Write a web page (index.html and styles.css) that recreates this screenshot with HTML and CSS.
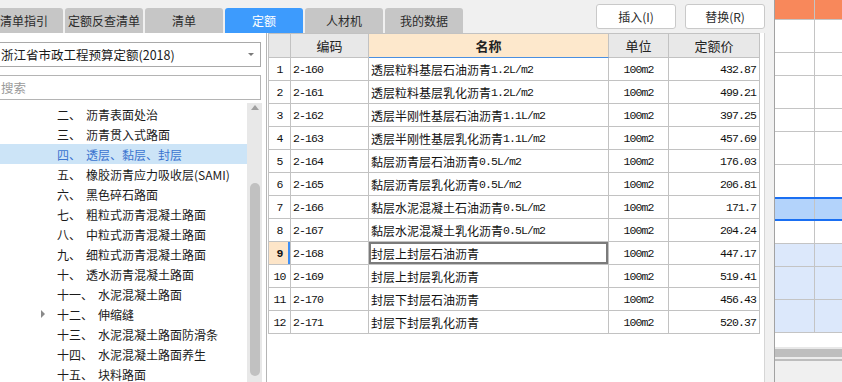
FILE: index.html
```html
<!DOCTYPE html>
<html lang="zh">
<head>
<meta charset="utf-8">
<title>定额</title>
<link rel="stylesheet" href="styles.css">
</head>
<body>
<div class="app">
  <div class="main">
    <div class="topbar">
      <div class="tabs">
        <div class="tab">清单指引</div>
        <div class="tab">定额反查清单</div>
        <div class="tab">清单</div>
        <div class="tab active">定额</div>
        <div class="tab">人材机</div>
        <div class="tab">我的数据</div>
      </div>
      <div class="actions">
        <button class="btn">插入(I)</button>
        <button class="btn">替换(R)</button>
      </div>
    </div>
    <div class="content">
      <aside class="left">
        <div class="select"><span>浙江省市政工程预算定额(2018)</span><i class="caret"></i></div>
        <div class="search">搜索</div>
        <div class="treewrap">
          <ul class="tree">
            <li class="node"><i class="toggle"></i><span class="num">二、</span><span class="label">沥青表面处治</span></li>
            <li class="node"><i class="toggle"></i><span class="num">三、</span><span class="label">沥青贯入式路面</span></li>
            <li class="node sel"><i class="toggle"></i><span class="num">四、</span><span class="label">透层、黏层、封层</span></li>
            <li class="node"><i class="toggle"></i><span class="num">五、</span><span class="label">橡胶沥青应力吸收层(SAMI)</span></li>
            <li class="node"><i class="toggle"></i><span class="num">六、</span><span class="label">黑色碎石路面</span></li>
            <li class="node"><i class="toggle"></i><span class="num">七、</span><span class="label">粗粒式沥青混凝土路面</span></li>
            <li class="node"><i class="toggle"></i><span class="num">八、</span><span class="label">中粒式沥青混凝土路面</span></li>
            <li class="node"><i class="toggle"></i><span class="num">九、</span><span class="label">细粒式沥青混凝土路面</span></li>
            <li class="node"><i class="toggle"></i><span class="num">十、</span><span class="label">透水沥青混凝土路面</span></li>
            <li class="node"><i class="toggle"></i><span class="num">十一、</span><span class="label">水泥混凝土路面</span></li>
            <li class="node"><i class="toggle has"></i><span class="num">十二、</span><span class="label">伸缩缝</span></li>
            <li class="node"><i class="toggle"></i><span class="num">十三、</span><span class="label">水泥混凝土路面防滑条</span></li>
            <li class="node"><i class="toggle"></i><span class="num">十四、</span><span class="label">水泥混凝土路面养生</span></li>
            <li class="node"><i class="toggle"></i><span class="num">十五、</span><span class="label">块料路面</span></li>
          </ul>
          <div class="vscroll"><i class="up"></i><i class="thumb"></i></div>
        </div>
      </aside>
      <section class="gridpanel">
        <div class="grid">
          <div class="h"></div>
          <div class="h">编码</div>
          <div class="h hname">名称</div>
          <div class="h">单位</div>
          <div class="h">定额价</div>

          <div class="rn m">1</div><div class="code m">2-160</div><div class="nm">透层粒料基层石油沥青<span class="m">1.2L/m2</span></div><div class="unit m">100m2</div><div class="price m">432.87</div>
          <div class="rn m">2</div><div class="code m">2-161</div><div class="nm">透层粒料基层乳化沥青<span class="m">1.2L/m2</span></div><div class="unit m">100m2</div><div class="price m">499.21</div>
          <div class="rn m">3</div><div class="code m">2-162</div><div class="nm">透层半刚性基层石油沥青<span class="m">1.1L/m2</span></div><div class="unit m">100m2</div><div class="price m">397.25</div>
          <div class="rn m">4</div><div class="code m">2-163</div><div class="nm">透层半刚性基层乳化沥青<span class="m">1.1L/m2</span></div><div class="unit m">100m2</div><div class="price m">457.69</div>
          <div class="rn m">5</div><div class="code m">2-164</div><div class="nm">黏层沥青层石油沥青<span class="m">0.5L/m2</span></div><div class="unit m">100m2</div><div class="price m">176.03</div>
          <div class="rn m">6</div><div class="code m">2-165</div><div class="nm">黏层沥青层乳化沥青<span class="m">0.5L/m2</span></div><div class="unit m">100m2</div><div class="price m">206.81</div>
          <div class="rn m">7</div><div class="code m">2-166</div><div class="nm">黏层水泥混凝土石油沥青<span class="m">0.5L/m2</span></div><div class="unit m">100m2</div><div class="price m">171.7</div>
          <div class="rn m">8</div><div class="code m">2-167</div><div class="nm">黏层水泥混凝土乳化沥青<span class="m">0.5L/m2</span></div><div class="unit m">100m2</div><div class="price m">204.24</div>
          <div class="rn m cur">9</div><div class="code m">2-168</div><div class="nm focus">封层上封层石油沥青</div><div class="unit m">100m2</div><div class="price m">447.17</div>
          <div class="rn m">10</div><div class="code m">2-169</div><div class="nm">封层上封层乳化沥青</div><div class="unit m">100m2</div><div class="price m">519.41</div>
          <div class="rn m">11</div><div class="code m">2-170</div><div class="nm">封层下封层石油沥青</div><div class="unit m">100m2</div><div class="price m">456.43</div>
          <div class="rn m">12</div><div class="code m">2-171</div><div class="nm">封层下封层乳化沥青</div><div class="unit m">100m2</div><div class="price m">520.37</div>
        </div>
      </section>
      <div class="gap"></div>
    </div>
  </div>
  <aside class="right">
    <div class="rrow rhead"><span></span><span></span></div>
    <div class="rrow r33"><span></span><span></span></div>
    <div class="rrow r23"><span></span><span></span></div>
    <div class="rrow r33"><span></span><span></span></div>
    <div class="rrow r23"><span></span><span></span></div>
    <div class="rrow r33"><span></span><span></span></div>
    <div class="rrow r32 nob"><span></span><span></span></div>
    <div class="rrow rsel"><span></span><span></span></div>
    <div class="rrow r23"><span></span><span></span></div>
    <div class="rrow r23 lb"><span></span><span></span></div>
    <div class="rrow r33 lb"><span></span><span></span></div>
    <div class="rrow r33 lb"><span></span><span></span></div>
    <div class="rblank"></div>
    <div class="rbar"></div>
    <div class="rline"></div>
    <div class="rrest"></div>
  </aside>
</div>
</body>
</html>
```

FILE: styles.css
```css
html, body {
  margin: 0;
  padding: 0;
}
body {
  width: 842px;
  height: 382px;
  overflow: hidden;
  background: #f0f0f0;
  font-family: "Noto Sans CJK SC", "Noto Sans", sans-serif;
  font-size: 12px;
  color: #1a1a1a;
}
.app {
  display: flex;
  height: 382px;
}
.main {
  width: 774px;
  display: flex;
  flex-direction: column;
  flex-shrink: 0;
}

/* top bar */
.topbar {
  height: 33px;
  flex-shrink: 0;
  display: flex;
  align-items: flex-start;
}
.tabs {
  display: flex;
  gap: 2px;
  margin-left: -15px;
  margin-top: 8px;
}
.tab {
  width: 78px;
  height: 25px;
  background: #c6c6c6;
  border-radius: 3px 3px 0 0;
  display: flex;
  align-items: center;
  justify-content: center;
  color: #2b2b2b;
  line-height: 1;
}
.tab.active {
  background: #3d9bfd;
  color: #fff;
}
.actions {
  margin-left: auto;
  margin-right: 9px;
  margin-top: 4px;
  display: flex;
  gap: 9px;
}
.btn {
  width: 80px;
  height: 25px;
  box-sizing: border-box;
  border: 1px solid #c9c9c9;
  border-radius: 3px;
  background: #fff;
  font-family: inherit;
  font-size: 12px;
  color: #2b2b2b;
  padding: 0;
}

/* content */
.content {
  flex: 1;
  display: flex;
  min-height: 0;
}
.left {
  width: 266px;
  flex-shrink: 0;
  background: #fff;
  display: flex;
  flex-direction: column;
  align-items: flex-start;
  overflow: hidden;
}
.select {
  margin: 9px 0 0 -6px;
  width: 267px;
  height: 25px;
  box-sizing: border-box;
  border: 1px solid #a9a9a9;
  display: flex;
  align-items: center;
  justify-content: space-between;
  padding: 0 6px 0 6px;
  font-size: 12.5px;
}
.caret {
  width: 0;
  height: 0;
  border-left: 3px solid transparent;
  border-right: 3px solid transparent;
  border-top: 3px solid #7a7a7a;
}
.search {
  margin: 8px 0 0 -6px;
  width: 267px;
  height: 25px;
  box-sizing: border-box;
  border: 1px solid #b4b4b4;
  display: flex;
  align-items: center;
  padding-left: 6px;
  color: #9a9a9a;
  font-size: 12.5px;
}
.treewrap {
  flex: 1;
  display: flex;
  margin-top: 3px;
  min-height: 0;
  width: 266px;
}
.tree {
  width: 247px;
  flex-shrink: 0;
  list-style: none;
  margin: 0;
  padding: 1px 0 0;
}
.node {
  height: 20px;
  display: flex;
  align-items: center;
  padding-left: 39px;
  white-space: nowrap;
}
.toggle {
  width: 18px;
  height: 20px;
  display: flex;
  align-items: center;
}
.toggle.has::before {
  content: "";
  margin-left: 2px;
  border-top: 4px solid transparent;
  border-bottom: 4px solid transparent;
  border-left: 4px solid #8a8a8a;
}
.label {
  margin-left: 5px;
}
.node.sel {
  background: #cce4f7;
  color: #3b74cf;
}
.vscroll {
  width: 15px;
  flex-shrink: 0;
  background: #e8e8e8;
  display: flex;
  flex-direction: column;
  align-items: center;
}
.up {
  width: 0;
  height: 0;
  border-left: 4px solid transparent;
  border-right: 4px solid transparent;
  border-bottom: 5px solid #a0a0a0;
  margin-top: 2px;
}
.thumb {
  width: 10px;
  height: 193px;
  border-radius: 5px;
  background: #c1c1c1;
  margin-top: 73px;
}

/* grid */
.gridpanel {
  width: 499px;
  flex-shrink: 0;
  box-sizing: border-box;
  border-left: 1px solid #b5b5b5;
  border-right: 1px solid #d6d6d6;
  background: #fff;
  padding-left: 1px;
}
.grid {
  display: grid;
  grid-template-columns: 22px 78px 240px 60px 91px;
  width: max-content;
  border-left: 1px solid #c2c2c2;
  border-top: 1px solid #c2c2c2;
}
.grid > div {
  box-sizing: border-box;
  height: 23px;
  border-right: 1px solid #c2c2c2;
  border-bottom: 1px solid #c2c2c2;
  display: flex;
  align-items: center;
  white-space: nowrap;
  overflow: hidden;
}
.grid > .h {
  height: 24px;
  background: #e8e8e8;
  justify-content: center;
  font-size: 13px;
  color: #222;
}
.grid > .hname {
  background: #fde8cc;
  font-weight: bold;
  border-bottom-color: #4a8fe0;
}
.m {
  font-family: "Liberation Mono", "DejaVu Sans Mono", monospace;
  font-size: 11.5px;
  letter-spacing: -0.9px;
  color: #111;
}
.nm {
  font-size: 12px;
  color: #111;
}
.rn {
  justify-content: center;
}
.code {
  padding-left: 2px;
}
.nm {
  padding-left: 2px;
}
.unit {
  justify-content: center;
}
.price {
  justify-content: flex-end;
  padding-right: 3px;
}
.grid > .rn.cur {
  background: #fde5c8;
  font-weight: bold;
  box-shadow: inset -2px 0 0 #3d8ef5;
}
.grid > .nm.focus {
  box-shadow: inset 0 0 0 2px #7b7b7b;
}

.gap {
  flex: 1;
}

/* right panel */
.right {
  width: 68px;
  flex-shrink: 0;
  box-sizing: border-box;
  border-left: 1px solid #a2a2a2;
  background: #fff;
  display: flex;
  flex-direction: column;
}
.rrow {
  display: grid;
  grid-template-columns: 40px 1fr;
  box-sizing: border-box;
  border-bottom: 1px solid #c4c4c4;
  flex-shrink: 0;
}
.rrow > span:first-child {
  border-right: 1px solid #c4c4c4;
}
.rhead {
  height: 20px;
  background: #f8885b;
}
.r33 { height: 33px; }
.r23 { height: 23px; }
.r32 { height: 32px; }
.nob { border-bottom: none; }
.rsel {
  height: 24px;
  background: #b3d3fb;
  border-top: 2px solid #1a6ff2;
  border-bottom: 2px solid #1a6ff2;
}
.lb {
  background: #dce8fb;
}
.rblank {
  height: 14px;
  flex-shrink: 0;
}
.rbar {
  height: 12px;
  flex-shrink: 0;
  box-sizing: border-box;
  background: #bebebe;
  border-top: 2px solid #e8e8e8;
  border-bottom: 2px solid #ececec;
}
.rline {
  height: 2px;
  flex-shrink: 0;
  background: #bdbdbd;
}
.rrest {
  flex: 1;
  background: #f0f0f0;
}
```
